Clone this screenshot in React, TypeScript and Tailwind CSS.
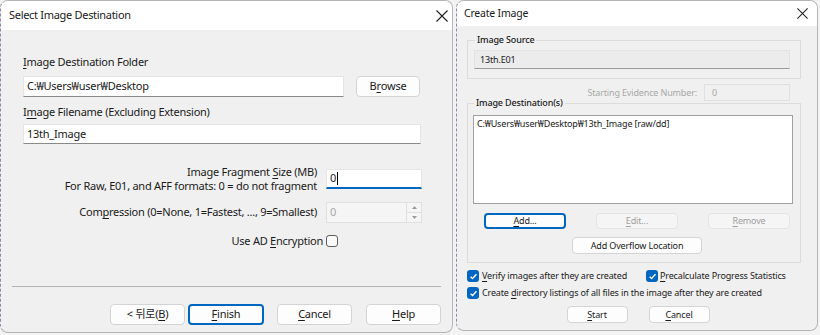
import React from 'react';

const FONT = "font-['Noto_Sans','Noto_Sans_CJK_KR',sans-serif]";

function U({ children }: any) {
  return <span className="underline underline-offset-2 decoration-1">{children}</span>;
}

function CloseIcon({ size = 14 }: any) {
  return (
    <svg width={size} height={size} viewBox="0 0 14 14" fill="none" stroke="#1f1f1f" strokeWidth="1.1">
      <path d="M1.5 1.5 L12.5 12.5 M12.5 1.5 L1.5 12.5" />
    </svg>
  );
}

function Check() {
  return (
    <svg width="9" height="9" viewBox="0 0 10 10" fill="none" stroke="white" strokeWidth="1.6">
      <path d="M1.8 5.2 L4 7.3 L8.3 2.6" />
    </svg>
  );
}

function CheckBox({ checked }: any) {
  return checked ? (
    <span className="w-[12px] h-[12px] rounded-[3px] bg-[#0067c0] flex items-center justify-center shrink-0">
      <Check />
    </span>
  ) : (
    <span className="w-[12px] h-[12px] rounded-[3px] border border-[#5f5f5f] bg-[#f9f9f9] shrink-0" />
  );
}

function Btn({ children, w, h = 21, focus, disabled }: any) {
  const base = 'flex items-center justify-center rounded-[4px] shrink-0';
  const look = disabled
    ? 'bg-[#f5f5f5] border border-[#e5e5e5] text-[#a0a0a0]'
    : focus
    ? 'bg-[#fdfdfd] border-2 border-[#0067c0] text-[#1a1a1a]'
    : 'bg-[#fdfdfd] border border-[#d4d4d4] text-[#1a1a1a]';
  return (
    <div className={`${base} ${look}`} style={{ width: w, height: h }}>
      {children}
    </div>
  );
}

function SelectDestination() {
  return (
    <div className="w-[453px] h-[333px] bg-[#f0f0f0] border border-[#b5b5b5] border-l-[#8a8aa6] [border-left-style:dashed] rounded-[8px] overflow-hidden flex flex-col shrink-0 text-[11px] tracking-[-0.25px] text-[#1a1a1a]">
      <div className="h-[29px] bg-white flex items-center justify-between pl-[8px] pr-[3px] shrink-0">
        <span className="text-[11px] tracking-[-0.3px]">Select Image Destination</span>
        <CloseIcon />
      </div>

      <div className="flex-1 pl-[22px] pt-[24px]">
        <div className="leading-[16px]"><U>I</U>mage Destination Folder</div>
        <div className="flex gap-[12px] mt-[6px]">
          <div className="w-[321px] h-[21px] bg-white border border-[#e5e5e5] border-b-[#8a8a8a] flex items-center pl-[3px]">
            C:₩Users₩user₩Desktop
          </div>
          <Btn w={64}>B<U>r</U>owse</Btn>
        </div>

        <div className="leading-[16px] mt-[7px]">I<U>m</U>age Filename (Excluding Extension)</div>
        <div className="w-[398px] h-[20px] mt-[4px] bg-white border border-[#e5e5e5] border-b-[#8a8a8a] flex items-center pl-[3px]">
          13th_Image
        </div>

        <div className="w-[399px] flex justify-end items-center gap-[9px] mt-[21px]">
          <div className="text-right leading-[14px]">
            <div>Image Fragment <U>S</U>ize (MB)</div>
            <div>For Raw, E01, and AFF formats: 0 = do not fragment</div>
          </div>
          <div className="w-[96px] h-[20px] bg-white border border-[#e5e5e5] border-b-2 border-b-[#0067c0] flex items-center pl-[3px]">
            0<span className="w-px h-[13px] bg-black ml-px" />
          </div>
        </div>

        <div className="w-[399px] flex justify-end items-center gap-[9px] mt-[9px]">
          <div className="text-right">Com<U>p</U>ression (0=None, 1=Fastest, ..., 9=Smallest)</div>
          <div className="w-[96px] h-[21px] bg-[#f5f5f5] border border-[#e0e0e0] flex items-center justify-between pl-[3px]">
            <span className="text-[#a8a8a8]">0</span>
            <div className="w-[15px] h-full border-l border-[#e0e0e0] flex flex-col">
              <div className="flex-1 flex items-center justify-center border-b border-[#e0e0e0]">
                <svg width="5" height="3" viewBox="0 0 5 3"><path d="M0 3 L2.5 0 L5 3Z" fill="#9a9a9a" /></svg>
              </div>
              <div className="flex-1 flex items-center justify-center">
                <svg width="5" height="3" viewBox="0 0 5 3"><path d="M0 0 L2.5 3 L5 0Z" fill="#9a9a9a" /></svg>
              </div>
            </div>
          </div>
        </div>

        <div className="w-[399px] flex justify-end items-center gap-[3px] pr-[84px] mt-[10px]">
          <span>Use AD <U>E</U>ncryption</span>
          <CheckBox />
        </div>
      </div>

      <div className="mx-[11px] border-t border-[#b4b4b4] shrink-0" />
      <div className="flex justify-end pr-[11px] pt-[17px] pb-[7px] shrink-0">
        <Btn w={75}>&lt; 뒤로(<U>B</U>)</Btn>
        <div className="ml-[3px]"><Btn w={76} focus><U>F</U>inish</Btn></div>
        <div className="ml-[13px]"><Btn w={75}><U>C</U>ancel</Btn></div>
        <div className="ml-[14px]"><Btn w={75}><U>H</U>elp</Btn></div>
      </div>
    </div>
  );
}

function CreateImage() {
  return (
    <div className="w-[362px] h-[331px] bg-[#f0f0f0] border border-[#b5b5b5] border-l-[#8a8aa6] [border-left-style:dashed] rounded-[8px] overflow-hidden flex flex-col shrink-0 text-[9px] tracking-[-0.15px] text-[#1a1a1a]">
      <div className="h-[25px] bg-white flex items-center justify-between pl-[7px] pr-[8px] shrink-0">
        <span className="text-[10.5px] tracking-[-0.2px]">Create Image</span>
        <CloseIcon size={13} />
      </div>

      <div className="flex-1 px-[10px]">
        <fieldset className="mt-[8px] border border-[#dcdcdc] px-[6px] pb-[9px] pt-[4px] w-[334px]">
          <legend className="px-[2px] ml-[1px] font-medium leading-[12px]">Image Source</legend>
          <div className="w-[316px] h-[19px] bg-[#ececec] border border-[#e3e3e3] border-b-[#9a9a9a] flex items-center pl-[5px]">
            13th.E01
          </div>
        </fieldset>

        <div className="w-[334px] flex justify-end items-center gap-[7px] mt-[5px] pr-[11px]">
          <span className="text-[#a8a8a8]">Starting Evidence Number:</span>
          <div className="w-[86px] h-[17px] bg-[#f0f0f0] border border-[#e0e0e0] flex items-center pl-[7px] text-[#a8a8a8]">0</div>
        </div>

        <fieldset className="mt-[-4px] border border-[#dcdcdc] px-[5px] pb-[8px] pt-[6px] w-[334px]">
          <legend className="px-[2px] ml-[1px] font-medium leading-[12px]">Image Destination(s)</legend>
          <div className="w-[320px] h-[89px] bg-white border border-[#a0a0a0] pl-[3px] pt-[1px]">
            C:₩Users₩user₩Desktop₩13th_Image [raw/dd]
          </div>
          <div className="flex gap-[30px] mt-[9px] pl-[11px]">
            <Btn w={82} h={16} focus><U>A</U>dd...</Btn>
            <Btn w={82} h={16} disabled><U>E</U>dit...</Btn>
            <Btn w={82} h={16} disabled><U>R</U>emove</Btn>
          </div>
          <div className="flex justify-center mt-[8px] pl-[6px]">
            <Btn w={130} h={17}>Add Overflow Location</Btn>
          </div>
        </fieldset>

        <div className="flex items-center mt-[5px] h-[16px]">
          <div className="flex items-center gap-[3px] w-[179px]">
            <CheckBox checked />
            <span><U>V</U>erify images after they are created</span>
          </div>
          <div className="flex items-center gap-[2px]">
            <CheckBox checked />
            <span><U>P</U>recalculate Progress Statistics</span>
          </div>
        </div>
        <div className="flex items-center gap-[3px] mt-[1px] h-[16px]">
          <CheckBox checked />
          <span>Create <U>d</U>irectory listings of all files in the image after they are created</span>
        </div>

        <div className="flex justify-center gap-[21px] mt-[5px] pl-[2px]">
          <Btn w={61} h={17}><U>S</U>tart</Btn>
          <Btn w={61} h={17}><U>C</U>ancel</Btn>
        </div>
      </div>
    </div>
  );
}

export default function App() {
  return (
    <div className={`w-[820px] h-[335px] bg-[#f3f3f3] flex gap-[3px] ${FONT}`}>
      <SelectDestination />
      <CreateImage />
    </div>
  );
}
